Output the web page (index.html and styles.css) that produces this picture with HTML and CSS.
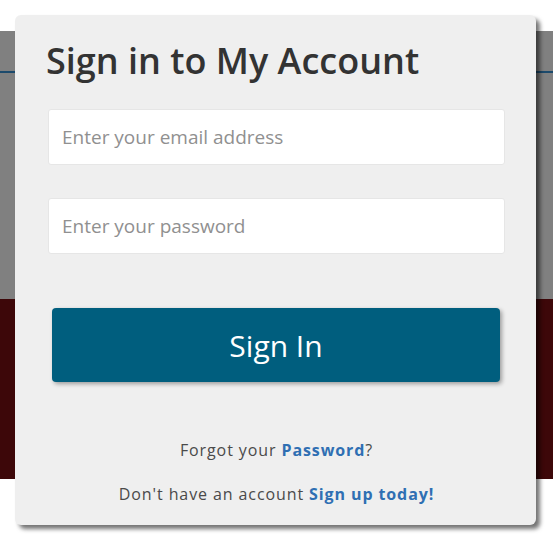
FILE: index.html
```html
<!DOCTYPE html>
<html lang="en">
<head>
  <meta charset="UTF-8">
  <title>Sign in</title>
  <link rel="stylesheet" href="styles.css">
</head>
<body>
<div class="backdrop">
  <div class="top-gap"></div>
  <div class="site-header">
    <div class="nav-line"></div>
  </div>
  <div class="site-band"></div>
</div>

<div class="signin-modal">
  <h1 class="title">Sign in to My Account</h1>
  <form class="signin-form">
    <input class="field" type="email" placeholder="Enter your email address">
    <input class="field" type="password" placeholder="Enter your password">
    <button class="submit" type="button">Sign In</button>
  </form>
  <div class="links">
    <p>Forgot your <a href="#">Password</a>?</p>
    <p>Don't have an account <a href="#">Sign up today!</a></p>
  </div>
</div>
</body>
</html>
```

FILE: styles.css
```css
* {
    box-sizing: border-box;
}

html, body {
    width: 100%;
    height: 100%;
    margin: 0;
    padding: 0;
}

body {
    font-family: 'Open Sans', 'Liberation Sans', Arial, sans-serif;
    background: #ffffff;
}

.backdrop .top-gap {
    height: 31px;
}

.backdrop .site-header {
    height: 268px;
    padding-top: 40px;
    background: #808080;
}

.backdrop .nav-line {
    height: 2px;
    background: #1c4a6c;
}

.backdrop .site-band {
    height: 180px;
    background: #3d0709;
}

.signin-modal {
    position: absolute;
    top: 15px;
    left: 15px;
    width: 521px;
    height: 510px;
    padding: 25px 31px 0 33px;
    border-radius: 6px;
    background: #efefef;
    box-shadow: 4px 4px 4px rgba(0, 0, 0, 0.55);
}

.signin-modal .title {
    margin: 0 0 27px -2px;
    font-size: 36px;
    font-weight: 600;
    line-height: 42px;
    color: #333333;
}

.signin-modal .signin-form {
    display: flex;
    flex-direction: column;
}

.signin-modal .field {
    height: 56px;
    margin: 0 0 33px;
    padding: 0 13px;
    border: 1px solid #e6e6e6;
    border-radius: 3px;
    background: #ffffff;
    font-family: inherit;
    font-size: 19px;
    color: #333333;
    outline: none;
}

.signin-modal .field::placeholder {
    color: #909090;
}

.signin-modal .submit {
    height: 74px;
    margin: 21px 5px 0 4px;
    border: 0;
    border-radius: 4px;
    background: #005e7e;
    box-shadow: 2px 2px 4px rgba(0, 0, 0, 0.35);
    font-family: inherit;
    font-size: 30px;
    color: #ffffff;
    cursor: pointer;
}

.signin-modal .links {
    margin-top: 57px;
    text-align: center;
    font-size: 16px;
    letter-spacing: 0.9px;
    color: #4a4a4a;
}

.signin-modal .links p {
    margin: 0 0 22px;
    line-height: 22px;
}

.signin-modal .links a {
    font-weight: 700;
    color: #2f6fb3;
    text-decoration: none;
}
```
